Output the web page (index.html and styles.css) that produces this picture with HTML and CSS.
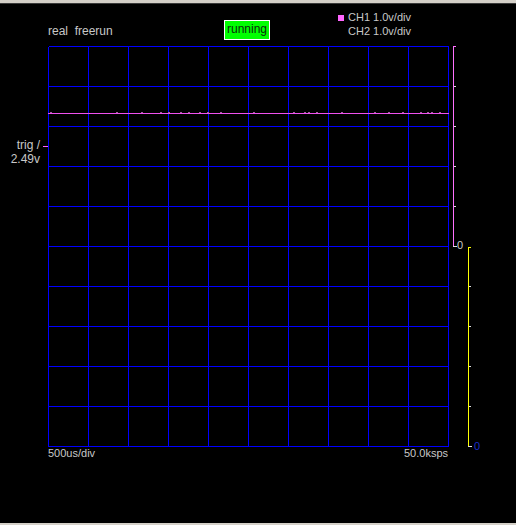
FILE: index.html
```html
<!DOCTYPE html>
<html>
<head>
<meta charset="utf-8">
<link rel="stylesheet" href="styles.css">
</head>
<body>
<div class="frame">
  <div class="topbar"></div>
  <div class="screen">
    <header class="head">
      <div class="title">real&nbsp; freerun</div>
      <div class="badge">running</div>
      <div class="legend">
        <div class="legend-row"><span class="swatch"></span>CH1 1.0v/div</div>
        <div class="legend-row"><span class="swatch swatch-off"></span>CH2 1.0v/div</div>
      </div>
    </header>
    <div class="main">
      <div class="side">
        <div class="trig">trig /</div>
        <div class="trig">2.49v</div>
      </div>
      <svg class="scope" width="440" height="402" viewBox="0 0 440 402">
        <g class="grid" stroke="#0000ff" stroke-width="1" fill="none">
          <path d="M8.5 1.5V401.5M48.5 1.5V401.5M88.5 1.5V401.5M128.5 1.5V401.5M168.5 1.5V401.5M208.5 1.5V401.5M248.5 1.5V401.5M288.5 1.5V401.5M328.5 1.5V401.5M368.5 1.5V401.5M408.5 1.5V401.5"/>
          <path d="M8.5 1.5H408.5M8.5 41.5H408.5M8.5 81.5H408.5M8.5 121.5H408.5M8.5 161.5H408.5M8.5 201.5H408.5M8.5 241.5H408.5M8.5 281.5H408.5M8.5 321.5H408.5M8.5 361.5H408.5M8.5 401.5H408.5"/>
        </g>
        <rect x="8" y="68" width="401" height="1" fill="#f050f0"/>
        <g fill="#a060a0">
          <rect x="10" y="67" width="2" height="1"/>
          <rect x="76" y="67" width="2" height="1"/>
          <rect x="101" y="67" width="2" height="1"/>
          <rect x="120" y="67" width="2" height="1"/>
          <rect x="128" y="67" width="2" height="1"/>
          <rect x="140" y="67" width="2" height="1"/>
          <rect x="148" y="67" width="2" height="1"/>
          <rect x="159" y="67" width="2" height="1"/>
          <rect x="167" y="67" width="2" height="1"/>
          <rect x="180" y="67" width="2" height="1"/>
          <rect x="213" y="67" width="2" height="1"/>
          <rect x="253" y="67" width="2" height="1"/>
          <rect x="264" y="67" width="2" height="1"/>
          <rect x="268" y="67" width="2" height="1"/>
          <rect x="276" y="67" width="2" height="1"/>
          <rect x="301" y="67" width="2" height="1"/>
          <rect x="334" y="67" width="2" height="1"/>
          <rect x="348" y="67" width="2" height="1"/>
          <rect x="362" y="67" width="2" height="1"/>
          <rect x="380" y="67" width="2" height="1"/>
          <rect x="387" y="67" width="2" height="1"/>
          <rect x="391" y="67" width="2" height="1"/>
          <rect x="399" y="67" width="2" height="1"/>
        </g>
        <rect x="3" y="101" width="5" height="1" fill="#ff60ff"/>
        <g fill="#ff70ff">
          <rect x="413" y="1" width="1" height="200"/>
          <rect x="413" y="1" width="3" height="1"/>
        </g>
        <g fill="#e0e0e0">
          <rect x="414" y="41" width="2" height="1"/>
          <rect x="414" y="81" width="2" height="1"/>
          <rect x="414" y="121" width="2" height="1"/>
          <rect x="414" y="161" width="2" height="1"/>
          <rect x="413" y="201" width="4" height="1"/>
        </g>
        <text x="417" y="204" class="axis-label">0</text>
        <g fill="#ffff00">
          <rect x="428" y="202" width="1" height="199"/>
          <rect x="428" y="202" width="3" height="1"/>
        </g>
        <g fill="#e0e0e0">
          <rect x="429" y="241" width="2" height="1"/>
          <rect x="429" y="281" width="2" height="1"/>
          <rect x="429" y="321" width="2" height="1"/>
          <rect x="429" y="361" width="2" height="1"/>
          <rect x="428" y="401" width="4" height="1"/>
        </g>
        <text x="434" y="405" class="axis-label axis-label-blue">0</text>
      </svg>
    </div>
    <footer class="foot">
      <span>500us/div</span>
      <span>50.0ksps</span>
    </footer>
  </div>
  <div class="bottombar"></div>
</div>
</body>
</html>
```
FILE: styles.css
```css
html, body {
  margin: 0;
  padding: 0;
  background: #000;
}
body {
  width: 516px;
  height: 525px;
  overflow: hidden;
  font-family: "Liberation Sans", Arial, sans-serif;
  color: #c8c8c8;
}
.frame {
  display: flex;
  flex-direction: column;
  height: 525px;
}
.topbar {
  height: 3px;
  background: #d4d0c8;
  border-bottom: 1px solid #3a3a3a;
}
.screen {
  height: 519px;
  background: #000;
  display: flex;
  flex-direction: column;
}
.bottombar {
  height: 2px;
  background: #d4d0c8;
}
.head {
  height: 41px;
  display: flex;
  align-items: flex-start;
}
.title {
  width: 224px;
  flex: none;
  box-sizing: border-box;
  padding-left: 48px;
  margin-top: 20px;
  font-size: 12px;
  line-height: 14px;
  white-space: nowrap;
}
.badge {
  width: 46px;
  height: 20px;
  flex: none;
  box-sizing: border-box;
  margin-top: 16px;
  border: 1px solid #ffffff;
  background: #00ff00;
  color: #0b2a0b;
  font-size: 12px;
  line-height: 16px;
  text-align: center;
}
.legend {
  margin-left: 68px;
  margin-top: 6px;
  font-size: 11px;
  line-height: 14px;
}
.legend-row {
  display: flex;
  align-items: center;
  white-space: nowrap;
}
.swatch {
  width: 6px;
  height: 6px;
  margin-right: 4px;
  margin-top: 2px;
  background: #ff66ff;
}
.swatch-off {
  background: transparent;
}
.main {
  display: flex;
  height: 402px;
}
.side {
  width: 40px;
  flex: none;
  padding-top: 93px;
  text-align: right;
  font-size: 12px;
  line-height: 14px;
}
.trig {
  white-space: nowrap;
}
.scope {
  display: block;
  flex: none;
  overflow: visible;
  shape-rendering: crispEdges;
}
.axis-label {
  font-family: "Liberation Sans", Arial, sans-serif;
  font-size: 11px;
  fill: #c8c8c8;
}
.axis-label-blue {
  fill: #1a2cc8;
}
.foot {
  width: 400px;
  margin-left: 48px;
  display: flex;
  justify-content: space-between;
  font-size: 11px;
  line-height: 13px;
}
```
